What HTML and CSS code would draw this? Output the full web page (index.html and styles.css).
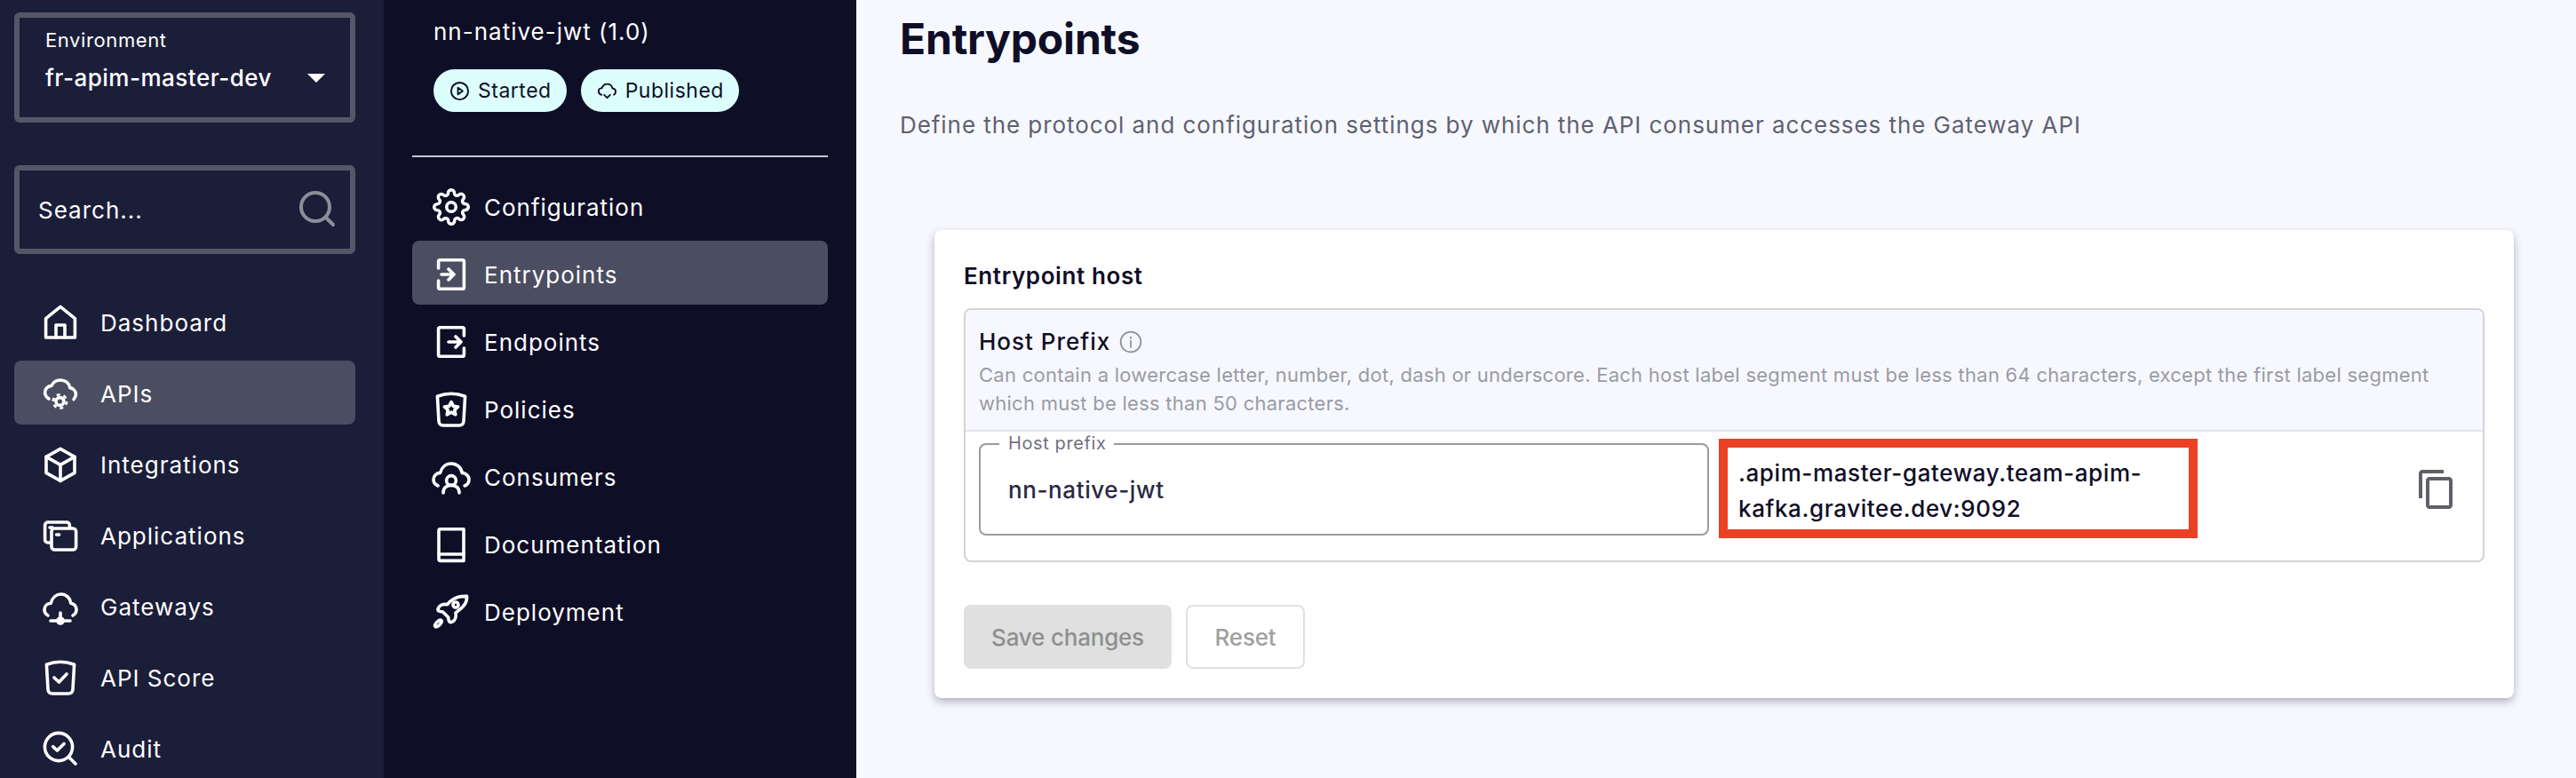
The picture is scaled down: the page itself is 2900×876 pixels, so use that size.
FILE: index.html
```html
<!DOCTYPE html>
<html>
<head>
    <meta charset="utf-8"/>
    <title>Entrypoints</title>
    <link rel="stylesheet" href="styles.css">
</head>
<body>
<div id="sidebar">
    <div class="env">
        <div class="env-label">Environment</div>
        <div class="env-row">
            <span class="env-value">fr-apim-master-dev</span>
            <svg class="caret" viewBox="0 0 20 10"><path d="M0 0h20L10 10z"/></svg>
        </div>
    </div>
    <div class="search">
        <span>Search...</span>
        <svg class="search-icon" viewBox="0 0 44 44"><circle cx="19" cy="19" r="16"/><path d="M31 31l8 8"/></svg>
    </div>
    <div class="nav">
        <div class="nav-item">
            <svg class="icon" viewBox="0 0 24 24"><path d="M3.8 20.5V9.8L12 3.2l8.2 6.6v10.7z"/><path d="M9.5 20.5v-7h5v7"/></svg>
            Dashboard
        </div>
        <div class="nav-item active">
            <svg class="icon" viewBox="0 0 24 24"><path d="M5.5 15C4 14 3.3 13 3.3 11.5c0-2.200 1.700-3.700 3.700-3.800C7.800 5.800 9.800 4.500 12 4.500c2.700 0 4.800 1.600 5.400 4.300 1.800.3 3.300 1.800 3.300 3.700 0 1.100-.5 2-1.200 2.800"/><circle cx="11.7" cy="16.500" r="2.200"/><circle class="teeth" cx="11.7" cy="16.500" r="3.800"/></svg>
            APIs
        </div>
        <div class="nav-item">
            <svg class="icon" viewBox="0 0 24 24"><path d="M12 3.200l8 4.500v9l-8 4.500-8-4.500v-9z"/><path d="M4 7.700l8 4.500 8-4.500M12 12.200v9"/></svg>
            Integrations
        </div>
        <div class="nav-item">
            <svg class="icon" viewBox="0 0 24 24"><path d="M6.500 16H5c-1 0-1.700-.7-1.700-1.700V6.200c0-1 .7-1.700 1.700-1.700h10.500c1 0 1.700.7 1.700 1.700v1.600"/><rect x="7" y="8" width="13.800" height="12" rx="1.700"/><path d="M6 7.500h1.500M9.800 11.500h1.500"/></svg>
            Applications
        </div>
        <div class="nav-item">
            <svg class="icon" viewBox="0 0 24 24"><path d="M5 17C3.600 16.300 3 15 3 13.800c0-2 1.500-3.600 3.600-3.700C7.400 7 9.700 5 12.300 5c3 0 5.200 2.200 5.600 5.100 1.900.3 3.100 1.800 3.100 3.700 0 1.200-.6 2.500-2 3.200"/><path d="M6.500 20h11M12 15.500V20"/><circle class="dot" cx="12" cy="20" r="1.500"/></svg>
            Gateways
        </div>
        <div class="nav-item">
            <svg class="icon" viewBox="0 0 24 24"><path d="M4.200 4.600C9 2.800 15 2.800 19.800 4.600L19 18.500c-.1 1.500-1 2.500-2.500 2.500h-9C6 21 5.100 20 5 18.500z"/><path d="M8.500 12l2.700 2.500 4.300-4.500"/></svg>
            API Score
        </div>
        <div class="nav-item">
            <svg class="icon" viewBox="0 0 24 24"><circle cx="11" cy="11" r="7.800"/><path d="M7.800 10.800l2.400 2.200 3.800-3.800"/><path d="M17 17l3.500 3.500"/></svg>
            Audit
        </div>
    </div>
</div>

<div id="subnav">
    <div class="api-name">nn-native-jwt (1.0)</div>
    <div class="chips">
        <div class="chip">
            <svg class="chip-icon" viewBox="0 0 24 24"><circle cx="12" cy="12" r="10"/><path d="M10 8l5.500 4-5.500 4z"/></svg>
            Started
        </div>
        <div class="chip">
            <svg class="chip-icon" viewBox="0 0 24 24"><path d="M5.500 16.500C3.500 16 2 14.500 2 12.500c0-2.200 1.700-3.900 3.900-4C6.800 5.700 9.200 3.800 12 3.800c3.200 0 5.700 2.200 6.200 5 2.200.2 3.800 1.800 3.800 3.900 0 1.500-.8 2.900-2 3.600"/><path d="M8.500 16.500l3.500 3.500 3.500-3.500"/></svg>
            Published
        </div>
    </div>
    <div class="divider"></div>
    <div class="subnav-list">
        <div class="sub-item">
            <svg class="icon gear" viewBox="0 0 24 24"><circle cx="12" cy="12" r="3"/><path d="M19.400 15a1.650 1.650 0 0 0 .33 1.820l.06.06a2 2 0 0 1 0 2.830 2 2 0 0 1-2.830 0l-.06-.06a1.650 1.650 0 0 0-1.820-.33 1.650 1.650 0 0 0-1 1.510V21a2 2 0 0 1-2 2 2 2 0 0 1-2-2v-.09A1.650 1.650 0 0 0 9 19.400a1.650 1.650 0 0 0-1.820.33l-.06.06a2 2 0 0 1-2.830 0 2 2 0 0 1 0-2.830l.06-.06a1.650 1.650 0 0 0 .33-1.820 1.650 1.650 0 0 0-1.510-1H3a2 2 0 0 1-2-2 2 2 0 0 1 2-2h.09A1.650 1.650 0 0 0 4.600 9a1.650 1.650 0 0 0-.33-1.820l-.06-.06a2 2 0 0 1 0-2.830 2 2 0 0 1 2.830 0l.06.06a1.650 1.650 0 0 0 1.820.33H9a1.650 1.650 0 0 0 1-1.510V3a2 2 0 0 1 2-2 2 2 0 0 1 2 2v.09a1.650 1.650 0 0 0 1 1.510 1.650 1.650 0 0 0 1.820-.33l.06-.06a2 2 0 0 1 2.830 0 2 2 0 0 1 0 2.830l-.06.06a1.650 1.650 0 0 0-.33 1.820V9a1.650 1.650 0 0 0 1.510 1H21a2 2 0 0 1 2 2 2 2 0 0 1-2 2h-.09a1.650 1.650 0 0 0-1.510 1z"/></svg>
            Configuration
        </div>
        <div class="sub-item active">
            <svg class="icon" viewBox="0 0 24 24"><path d="M4.800 8.500V4.800c0-.5.4-.9.900-.9h12.600c.5 0 .9.400.9.900v14.400c0 .5-.4.900-.9.900H5.700c-.5 0-.9-.4-.9-.9v-3.700"/><path d="M6.500 12h7M10.500 9l3 3-3 3"/></svg>
            Entrypoints
        </div>
        <div class="sub-item">
            <svg class="icon" viewBox="0 0 24 24"><path d="M19.200 8.500V4.800c0-.5-.4-.9-.9-.9H5.700c-.5 0-.9.400-.9.900v14.400c0 .5.400.9.900.9h12.600c.5 0 .9-.4.900-.9v-3.700"/><path d="M10.500 12h7M14.500 9l3 3-3 3"/></svg>
            Endpoints
        </div>
        <div class="sub-item">
            <svg class="icon" viewBox="0 0 24 24"><path d="M4.200 4.600C9 2.800 15 2.800 19.800 4.600L19 18.500c-.1 1.500-1 2.500-2.500 2.500h-9C6 21 5.100 20 5 18.500z"/><path d="M12 7.800l1.200 2.400 2.600.3-1.900 1.800.5 2.600-2.400-1.300-2.400 1.300.5-2.600-1.900-1.800 2.600-.3z"/></svg>
            Policies
        </div>
        <div class="sub-item">
            <svg class="icon" viewBox="0 0 24 24"><path d="M4.500 17C2.900 16.300 2 15 2 13.500c0-2 1.600-3.700 3.800-3.800C6.600 6.500 9 4.500 12 4.500c3.200 0 5.600 2.200 6.100 5.200 2.200.2 3.900 1.800 3.900 3.900 0 1.500-.9 2.700-2.400 3.400"/><circle cx="12" cy="14" r="2.700"/><path d="M7.500 21c0-3 2-4.300 4.500-4.300s4.500 1.300 4.500 4.300"/></svg>
            Consumers
        </div>
        <div class="sub-item">
            <svg class="icon" viewBox="0 0 24 24"><path d="M5 18V4.200c0-.5.3-.8.800-.8H19v17.800H6c-.6 0-1-.4-1-1z"/><path d="M5 17.500h14"/></svg>
            Documentation
        </div>
        <div class="sub-item">
            <svg class="icon" viewBox="0 0 24 24"><path d="M20.800 3.200c-4.500-.2-8.500 1.300-11 4.600-2.500-.4-4.800.4-5.300 2.700-.2 1 1 1.300 2.800 1.500l3 3c.2 1.800.5 3 1.500 2.800 2.300-.5 3.100-2.800 2.700-5.300 3.300-2.500 6.500-4.800 6.300-9.300z"/><circle cx="14.500" cy="8" r="1.500"/><ellipse cx="4.700" cy="18.500" rx="2.400" ry="1.100" transform="rotate(-45 4.700 18.500)"/></svg>
            Deployment
        </div>
    </div>
</div>

<div id="main">
    <h1 class="title">Entrypoints</h1>
    <p class="subtitle">Define the protocol and configuration settings by which the API consumer accesses the Gateway API</p>

    <div class="card">
        <div class="card-title">Entrypoint host</div>
        <div class="box">
            <div class="box-head">
                <div class="box-title">
                    Host Prefix
                    <svg class="info" viewBox="0 0 24 24"><circle cx="12" cy="12" r="10.500"/><path d="M12 11v6.500M12 7v1.200"/></svg>
                </div>
                <div class="box-desc">Can contain a lowercase letter, number, dot, dash or underscore. Each host label segment must be less than 64 characters, except the first label segment which must be less than 50 characters.</div>
            </div>
            <div class="box-body">
                <div class="field">
                    <span class="field-label">Host prefix</span>
                    <span class="field-value">nn-native-jwt</span>
                </div>
                <div class="domain">.apim-master-gateway.team-apim-kafka.gravitee.dev:9092</div>
                <svg class="copy" viewBox="0 0 24 24"><path d="M16 1H4c-1.100 0-2 .9-2 2v14h2V3h12V1zm3 4H8c-1.100 0-2 .9-2 2v14c0 1.100.9 2 2 2h11c1.100 0 2-.9 2-2V7c0-1.100-.9-2-2-2zm0 16H8V7h11v14z"/></svg>
            </div>
        </div>
        <div class="actions">
            <div class="btn btn-save">Save changes</div>
            <div class="btn btn-reset">Reset</div>
        </div>
    </div>
</div>
</body>
</html>
```

FILE: styles.css
```css
body, html {
    margin: 0px;
    padding: 0px;
    height: 100%;
    overflow: hidden;
}

body {
    display: flex;
    flex-direction: row;
    font-family: 'Inter', 'Noto Sans', sans-serif;
    font-size: 26px;
    letter-spacing: 1px;
}

/* first sidebar */
#sidebar {
    flex: 0 0 432px;
    box-sizing: border-box;
    padding: 14px 32px 0px 16px;
    background-color: #1b1e39;
    color: #ffffff;
}

.env {
    height: 124px;
    box-sizing: border-box;
    border: 6px solid #555769;
    border-radius: 6px;
    padding: 9px 28px 0px 29px;
}

.env-label {
    font-size: 22px;
    line-height: 32px;
    letter-spacing: 0.6px;
}

.env-row {
    display: flex;
    align-items: center;
    justify-content: space-between;
    margin-top: 7px;
}

.env-value {
    font-weight: 500;
    line-height: 40px;
    letter-spacing: 0.5px;
}

.caret {
    width: 20px;
    height: 10px;
    fill: #ffffff;
}

.search {
    height: 100px;
    box-sizing: border-box;
    margin-top: 48px;
    border: 6px solid #555769;
    border-radius: 6px;
    padding: 0px 14px 0px 21px;
    display: flex;
    align-items: center;
    justify-content: space-between;
}

.search-icon {
    width: 44px;
    height: 44px;
    fill: none;
    stroke: #8d8e99;
    stroke-width: 4;
    stroke-linecap: round;
}

.nav {
    margin-top: 40px;
    display: flex;
    flex-direction: column;
    gap: 8px;
}

.nav-item {
    height: 72px;
    box-sizing: border-box;
    padding: 2px 0px 0px 28px;
    gap: 21px;
    display: flex;
    align-items: center;
    border-radius: 8px;
}

.nav-item.active, .sub-item.active {
    background-color: #4b4d60;
}

.icon {
    width: 48px;
    height: 48px;
    flex: 0 0 48px;
    fill: none;
    stroke: #ffffff;
    stroke-width: 1.8;
    stroke-linecap: round;
    stroke-linejoin: round;
}

.icon.gear {
    width: 42px;
    height: 42px;
    flex: 0 0 42px;
    margin: 0px 3px;
    stroke-width: 2;
}

.icon .teeth {
    stroke-width: 1.4;
    stroke-dasharray: 2 1.98;
    stroke-linecap: butt;
}

.icon .dot {
    fill: #ffffff;
}

/* second sidebar */
#subnav {
    flex: 0 0 532px;
    box-sizing: border-box;
    padding: 16px 32px 0px 32px;
    background-color: #0f0e27;
    color: #ffffff;
}

.api-name {
    margin-left: 24px;
    line-height: 40px;
}

.chips {
    display: flex;
    gap: 16px;
    margin: 22px 0px 0px 24px;
}

.chip {
    height: 48px;
    padding: 0px 17px 0px 18px;
    border-radius: 24px;
    background-color: #dcfffe;
    color: #0f0e27;
    font-size: 23px;
    letter-spacing: 0.5px;
    display: flex;
    align-items: center;
    gap: 9px;
}

.chip-icon {
    width: 23px;
    height: 23px;
    fill: none;
    stroke: #0f0e27;
    stroke-width: 2;
    stroke-linecap: round;
    stroke-linejoin: round;
}

.divider {
    height: 2px;
    margin-top: 49px;
    background-color: #c9c9d0;
}

.subnav-list {
    margin-top: 18px;
    display: flex;
    flex-direction: column;
    gap: 4px;
}

.sub-item {
    height: 72px;
    box-sizing: border-box;
    padding: 4px 0px 0px 20px;
    gap: 13px;
    display: flex;
    align-items: center;
    border-radius: 8px;
}

/* content */
#main {
    flex: 1;
    box-sizing: border-box;
    padding: 0px 70px 0px 49px;
    background-color: #f7f8fd;
    color: #0f0e27;
}

.title {
    margin: 14px 0px 0px 0px;
    font-size: 48px;
    line-height: 60px;
    font-weight: 700;
    letter-spacing: -0.2px;
}

.subtitle {
    margin: 47px 0px 0px 0px;
    line-height: 40px;
    letter-spacing: 0.94px;
    color: #5f6172;
}

.card {
    margin: 98px 0px 0px 39px;
    height: 527px;
    box-sizing: border-box;
    padding: 33px 33px 0px 33px;
    background-color: #ffffff;
    border-radius: 8px;
    box-shadow: 0px 4px 10px rgba(15, 14, 39, 0.3);
}

.card-title {
    font-weight: 600;
    line-height: 38px;
    letter-spacing: 0.6px;
}

.box {
    margin-top: 17px;
    height: 286px;
    box-sizing: border-box;
    border: 2px solid #d3d3da;
    border-radius: 8px;
    overflow: hidden;
}

.box-head {
    height: 137px;
    box-sizing: border-box;
    padding: 18px 30px 0px 15px;
    background-color: #f7f8fd;
    border-bottom: 2px solid #e4e5ec;
}

.box-title {
    display: flex;
    align-items: center;
    gap: 10px;
    font-weight: 500;
    line-height: 36px;
}

.info {
    width: 26px;
    height: 26px;
    fill: none;
    stroke: #8d8e99;
    stroke-width: 1.6;
    stroke-linecap: round;
}

.box-desc {
    margin-top: 3px;
    font-size: 22px;
    line-height: 32px;
    letter-spacing: 0.26px;
    color: #9a9ba6;
}

.box-body {
    display: flex;
    align-items: flex-start;
    padding: 7px 28px 0px 15px;
}

.field {
    position: relative;
    flex: 0 0 822px;
    height: 104px;
    margin-top: 6px;
    box-sizing: border-box;
    border: 2px solid #9b9b9b;
    border-radius: 8px;
    padding-left: 31px;
    display: flex;
    align-items: center;
}

.field-label {
    position: absolute;
    left: 21px;
    top: -15px;
    padding: 0px 9px 0px 10px;
    background-color: #ffffff;
    font-size: 20px;
    line-height: 26px;
    letter-spacing: 0.6px;
    color: #6f7080;
}

.field-value {
    color: #2a2a45;
    font-weight: 500;
    letter-spacing: 0.6px;
}

.domain {
    flex: 0 0 539px;
    height: 112px;
    margin: 1px 0px 0px 11px;
    box-sizing: border-box;
    border: 10px solid #eb4025;
    padding: 5px 40px 0px 12px;
    display: flex;
    align-items: center;
    font-weight: 500;
    line-height: 40px;
    letter-spacing: 0.6px;
}

.copy {
    width: 48px;
    height: 48px;
    margin: 34px 0px 0px auto;
    fill: #5f6068;
}

.actions {
    display: flex;
    gap: 16px;
    margin-top: 48px;
}

.btn {
    height: 72px;
    box-sizing: border-box;
    border-radius: 8px;
    display: flex;
    align-items: center;
    justify-content: center;
    font-weight: 500;
    letter-spacing: -0.2px;
}

.btn-save {
    width: 234px;
    background-color: #e0e0e0;
    color: #8f8f8f;
}

.btn-reset {
    width: 134px;
    border: 2px solid #e0e0e0;
    color: #a0a0a0;
}
```
